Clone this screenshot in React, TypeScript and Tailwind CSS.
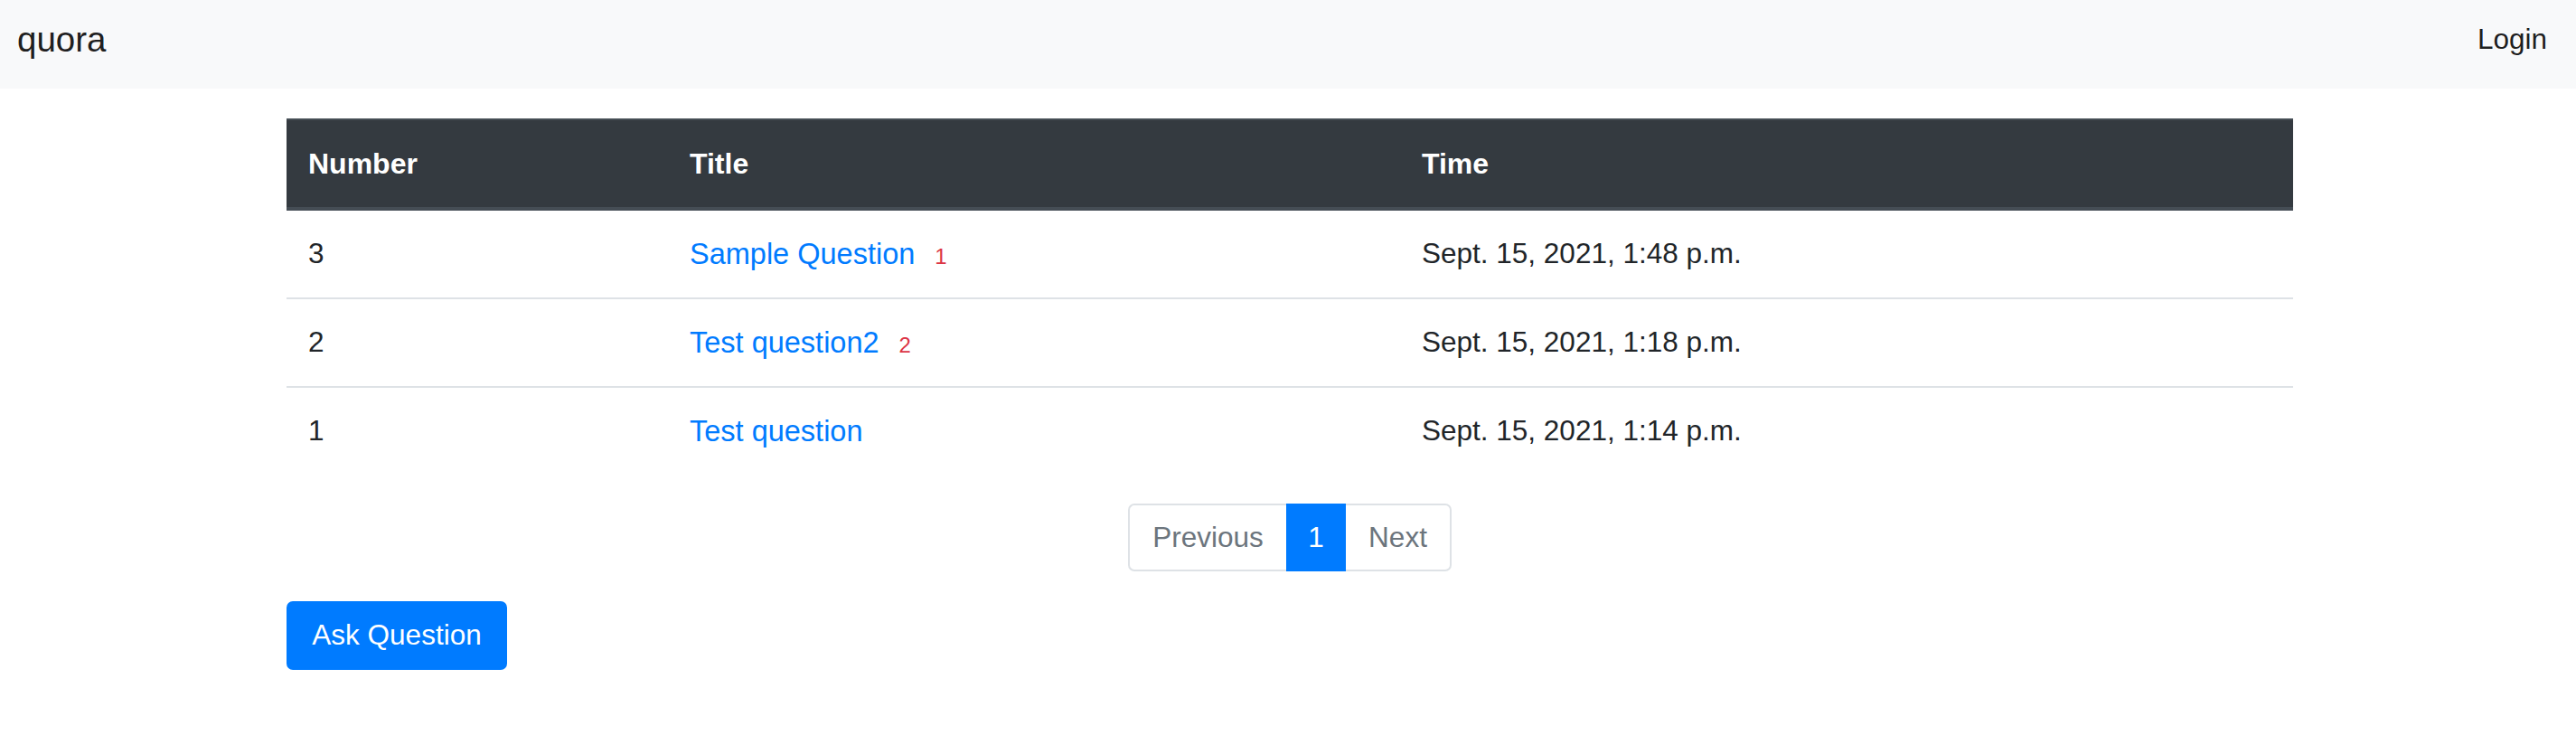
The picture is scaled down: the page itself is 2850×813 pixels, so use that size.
import React from 'react';

// QUESTION LIST PAGE
const questions = [
  { id: 3, title: 'Sample Question', answers: 1, time: 'Sept. 15, 2021, 1:48 p.m.' },
  { id: 2, title: 'Test question2', answers: 2, time: 'Sept. 15, 2021, 1:18 p.m.' },
  { id: 1, title: 'Test question', answers: 0, time: 'Sept. 15, 2021, 1:14 p.m.' },
];

const cols = 'grid grid-cols-[422px_810px_1fr] items-center';

const App: React.FC = () => {
  return (
    <div className="min-h-[813px] bg-white font-['Liberation_Sans',Arial,sans-serif] text-[31.5px] text-[#212529]">
      <nav className="flex h-[98px] items-center justify-between bg-[#f8f9fa] pb-[11px] pl-[19px] pr-[32px]">
        <a href="#" className="text-[38.5px] text-black/90">quora</a>
        <a href="#" className="text-black/90">Login</a>
      </nav>

      <main className="ml-[317px] mt-[33px] w-[2220px]">
        <div className={`${cols} h-[102px] border-t-2 border-b-4 border-[#454d55] bg-[#343a40] text-[32px] font-bold text-white`}>
          <div className="pl-[24px]">Number</div>
          <div className="pl-[24px]">Title</div>
          <div className="pl-[24px]">Time</div>
        </div>

        {questions.map((q, index) => (
          <div
            key={q.id}
            className={`${cols} ${index === 0 ? 'h-[96px]' : 'h-[98px] border-t-2 border-[#dee2e6]'}`}
          >
            <div className="pl-[24px]">{q.id}</div>
            <div className="pl-[24px]">
              <a href="#" className="text-[32.5px] text-[#007bff]">{q.title}</a>
              {q.answers > 0 && (
                <span className="ml-[22px] text-[24px] text-[#dc3545]">{q.answers}</span>
              )}
            </div>
            <div className="pl-[24px]">{q.time}</div>
          </div>
        ))}

        <div className="mt-[32px] flex justify-center">
          <div className="flex h-[75px]">
            <a href="#" className="flex w-[175px] items-center justify-center rounded-l-[7px] border-2 border-r-0 border-[#dee2e6] text-[#6c757d]">
              Previous
            </a>
            <a href="#" className="flex w-[66px] items-center justify-center bg-[#007bff] text-white">
              1
            </a>
            <a href="#" className="flex w-[117px] items-center justify-center rounded-r-[7px] border-2 border-l-0 border-[#dee2e6] text-[#6c757d]">
              Next
            </a>
          </div>
        </div>

        <button className="mt-[33px] flex h-[76px] w-[244px] items-center justify-center rounded-[7px] bg-[#007bff] text-white">
          Ask Question
        </button>
      </main>
    </div>
  );
};

export default App;
